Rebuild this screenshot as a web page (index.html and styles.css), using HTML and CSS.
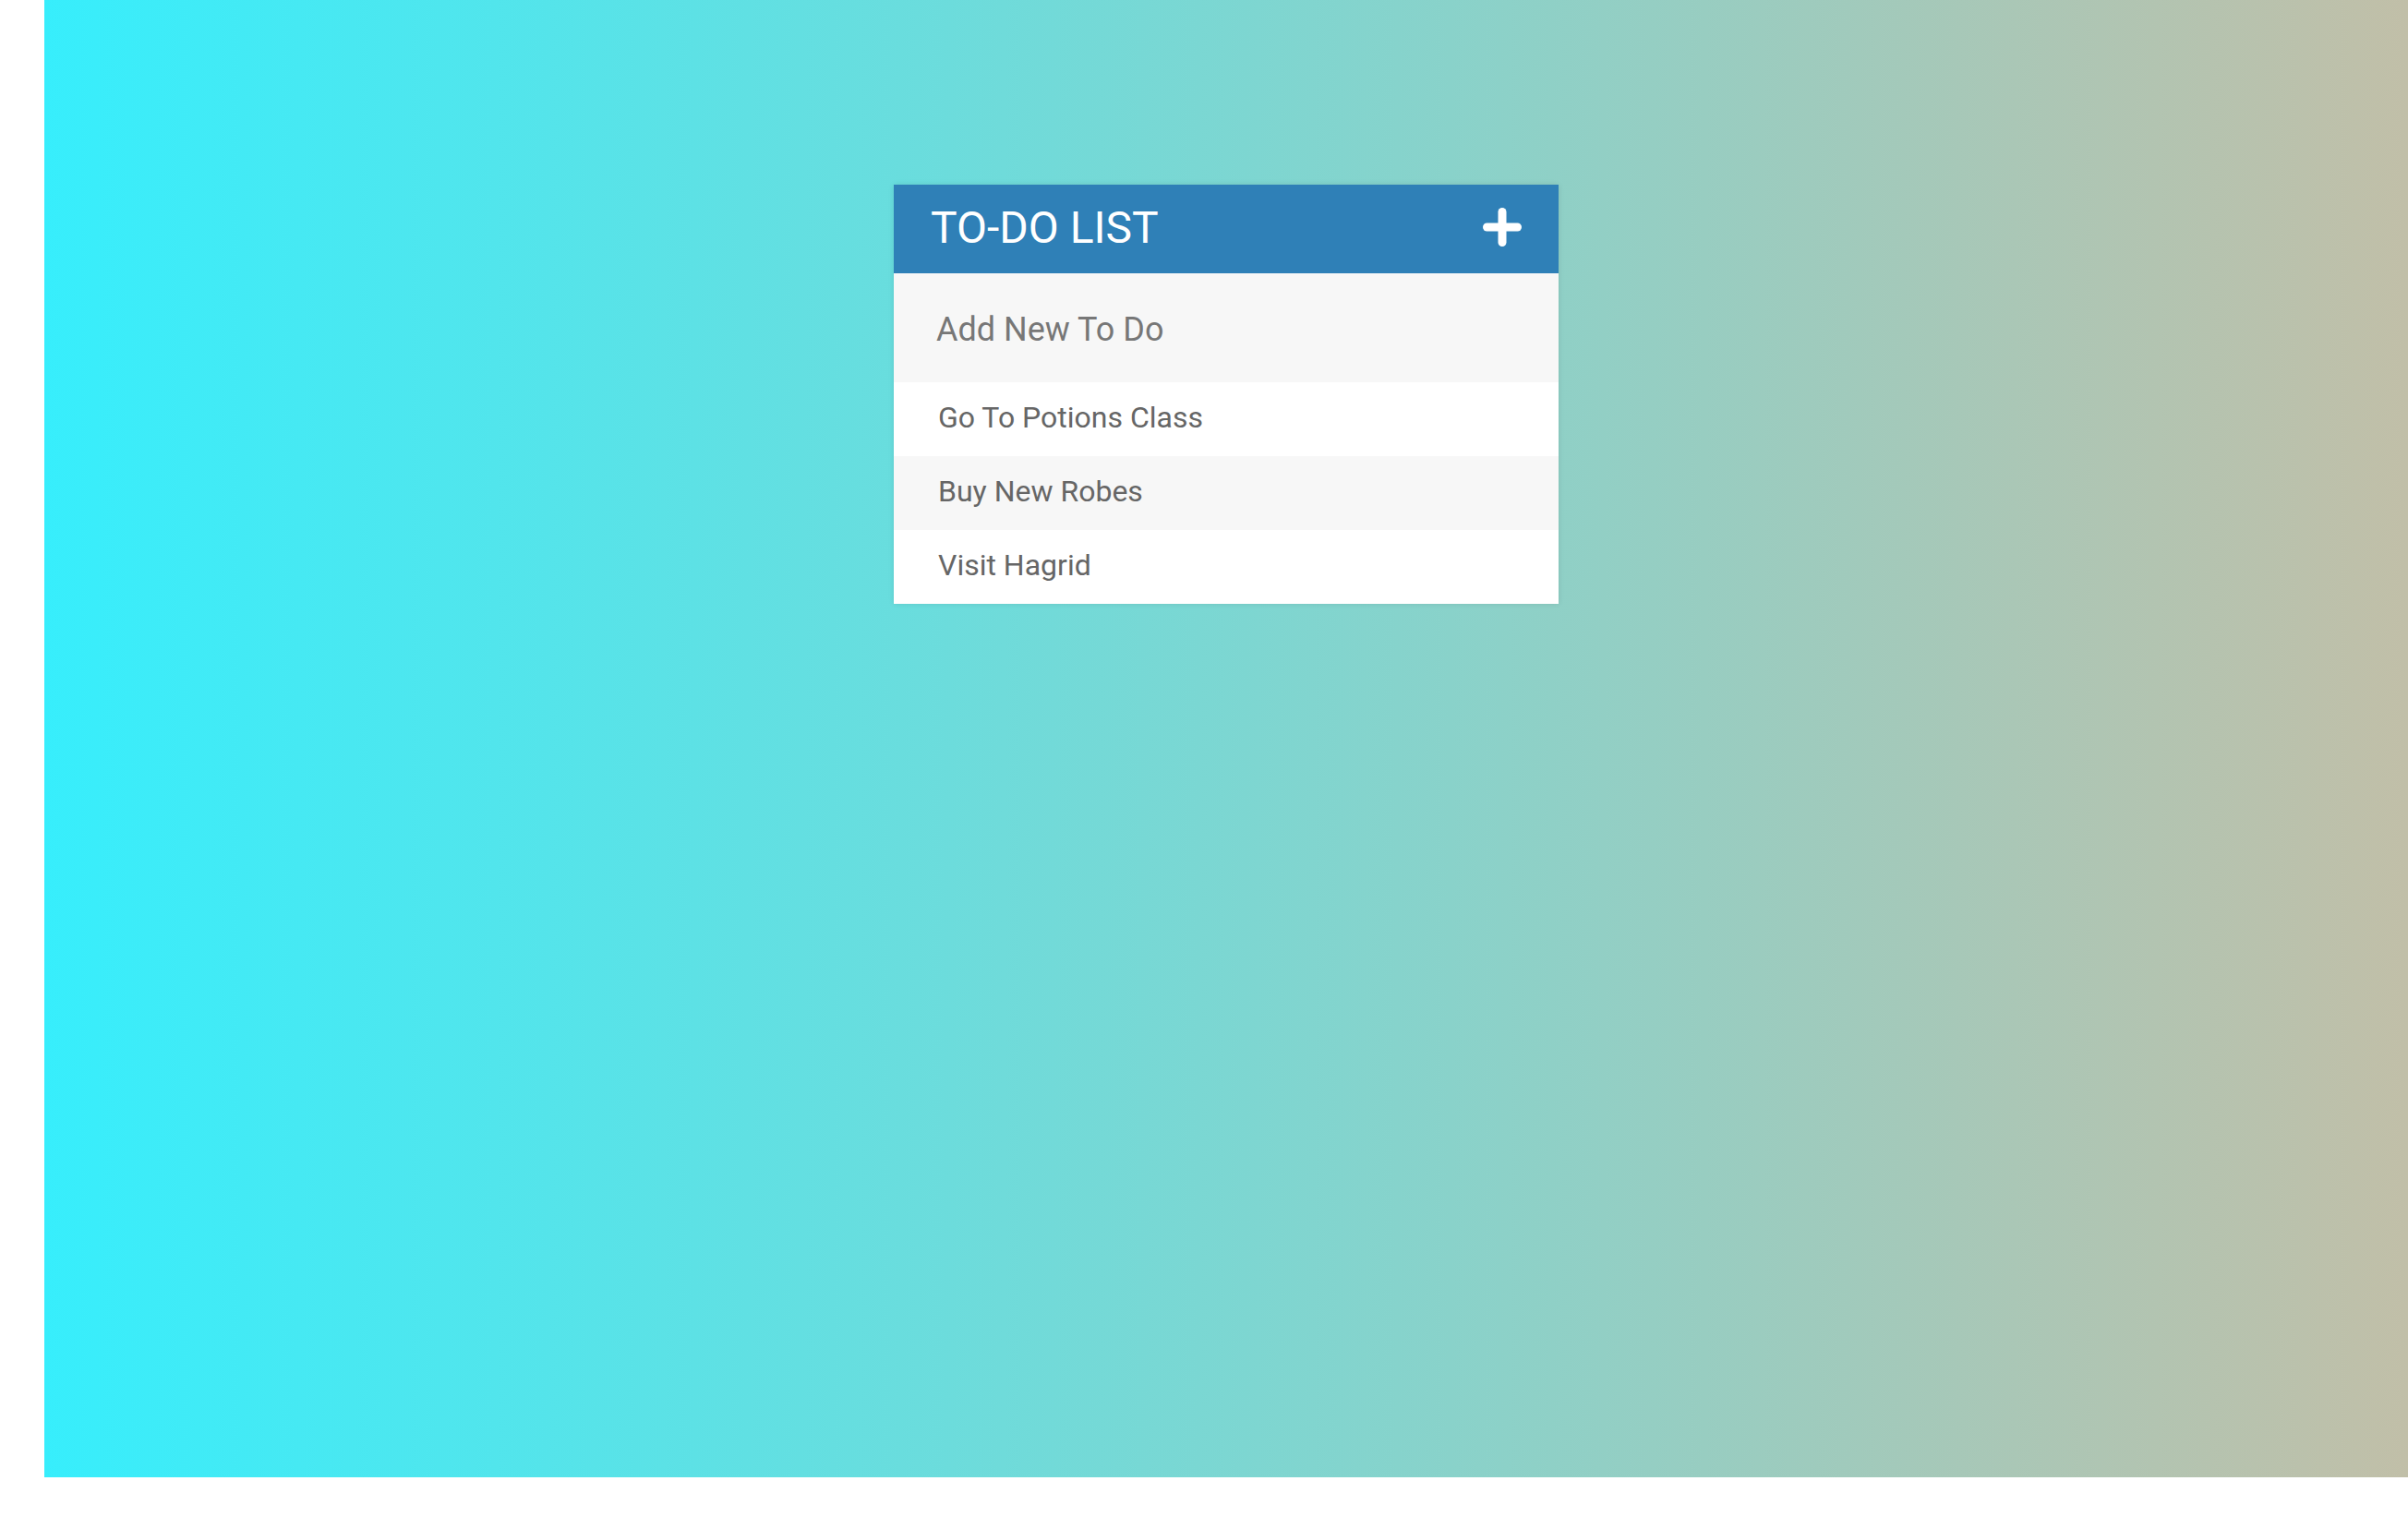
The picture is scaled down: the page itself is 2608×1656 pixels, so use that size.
FILE: index.html
```html
<!DOCTYPE html>
<html lang="en">
<head>
<meta charset="utf-8">
<title>To-Do List</title>
<link rel="stylesheet" href="styles.css">
</head>
<body>
<div class="stage">
  <div class="container">
    <h1 class="title">
      <span class="title-text">To-Do List</span>
      <svg class="plus" viewBox="0 0 42 42" width="42" height="42" aria-hidden="true">
        <rect x="16.5" y="0" width="9" height="42" rx="4.5" fill="#fff"/>
        <rect x="0" y="16.5" width="42" height="9" rx="4.5" fill="#fff"/>
      </svg>
    </h1>
    <input class="new-todo" type="text" placeholder="Add New To Do">
    <ul class="todos">
      <li class="todo">Go To Potions Class</li>
      <li class="todo">Buy New Robes</li>
      <li class="todo">Visit Hagrid</li>
    </ul>
  </div>
</div>
</body>
</html>
```

FILE: styles.css
```css
html, body {
  margin: 0;
  padding: 0;
  background: #ffffff;
}

body {
  font-family: Roboto, "Noto Sans", "Liberation Sans", sans-serif;
}

.stage {
  margin-left: 48px;
  height: 1600px;
  padding-top: 200px;
  box-sizing: border-box;
  background: linear-gradient(to right, #37eefc, #c1bfa8);
}

.container {
  width: 720px;
  margin: 0 auto;
  background: #f7f7f7;
  box-shadow: 0 0 6px rgba(0, 0, 0, 0.1);
}

.title {
  display: flex;
  align-items: center;
  justify-content: space-between;
  margin: 0;
  height: 96px;
  padding: 0 40px 0 40px;
  box-sizing: border-box;
  background: #2f80b7;
  color: #ffffff;
  font-size: 48px;
  font-weight: 400;
  text-transform: uppercase;
  line-height: 1;
}

.title-text {
  display: block;
  margin-top: -2px;
}

.plus {
  display: block;
  margin-top: -4px;
}

.new-todo {
  display: block;
  width: 100%;
  height: 118px;
  box-sizing: border-box;
  margin: 0;
  padding: 3px 26px 0 40px;
  border: 6px solid transparent;
  background: #f7f7f7;
  font-family: Roboto, "Noto Sans", "Liberation Sans", sans-serif;
  font-size: 36px;
  color: #2980b9;
  outline: none;
}

.new-todo::placeholder {
  color: #777777;
}

.todos {
  list-style: none;
  margin: 0;
  padding: 0;
}

.todo {
  height: 80px;
  line-height: 77px;
  padding-left: 48px;
  font-size: 32px;
  color: #666666;
  background: #ffffff;
}

.todo:nth-child(2n) {
  background: #f7f7f7;
}
```
